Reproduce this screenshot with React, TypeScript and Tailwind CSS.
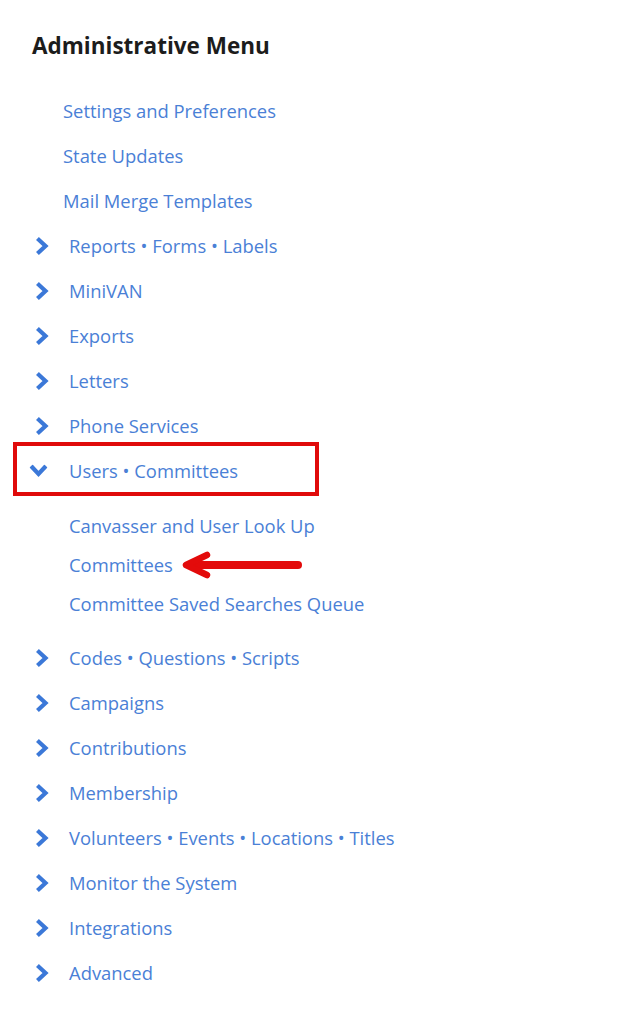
import React from 'react';

const Chevron: React.FC<{ open?: boolean }> = ({ open }) => (
    <svg
        viewBox="0 0 13 18"
        className={`h-[18px] w-[13px] shrink-0 ${open ? 'rotate-90' : ''}`}
        fill="none"
        stroke="#3b78d8"
        strokeWidth={4.2}
        strokeLinecap="square"
        strokeLinejoin="miter"
    >
        <path d="M3 3 L9.5 9 L3 15" />
    </svg>
);

const Arrow: React.FC = () => (
    <svg viewBox="0 0 124 28" className="ml-[7px] h-[28px] w-[124px]" fill="none">
        <path d="M16 14 H118" stroke="#e30b0b" strokeWidth={8} strokeLinecap="round" />
        <path d="M27 4 L6 14 L27 24" stroke="#e30b0b" strokeWidth={6.5} strokeLinecap="round" strokeLinejoin="round" />
    </svg>
);

const topLinks = ['Settings and Preferences', 'State Updates', 'Mail Merge Templates'];
const before = ['Reports • Forms • Labels', 'MiniVAN', 'Exports', 'Letters', 'Phone Services'];
const subItems = ['Canvasser and User Look Up', 'Committees', 'Committee Saved Searches Queue'];
const after = [
    'Codes • Questions • Scripts',
    'Campaigns',
    'Contributions',
    'Membership',
    'Volunteers • Events • Locations • Titles',
    'Monitor the System',
    'Integrations',
    'Advanced',
];

function Section({ label }: { label: string }) {
    return (
        <div className="flex h-[45px] items-center">
            <div className="flex w-[37px] justify-start pl-[4px]">
                <Chevron />
            </div>
            <a className="cursor-pointer text-[#4a80d6]">{label}</a>
        </div>
    );
}

export default function App() {
    return (
        <div
            className="min-h-[1023px] w-[637px] bg-white pl-[32px] pt-[31px] text-[18.4px]"
            style={{ fontFamily: '"Open Sans", "Noto Sans", sans-serif' }}
        >
            <h1 className="text-[22.5px] leading-[30px] font-bold text-[#1c1c1c]">Administrative Menu</h1>
            <div className="mt-[27px] flex flex-col">
                {topLinks.map((l) => (
                    <div key={l} className="flex h-[45px] items-center pl-[31px]">
                        <a className="cursor-pointer text-[#4a80d6]">{l}</a>
                    </div>
                ))}
                {before.map((l) => (
                    <Section key={l} label={l} />
                ))}
                <div className="-mt-[6px] -ml-[19px] flex h-[54px] w-[306px] items-center border-[4px] border-[#e00a0a] pt-[4px] pl-[15px]">
                    <div className="flex w-[37px] justify-start">
                        <Chevron open />
                    </div>
                    <a className="cursor-pointer text-[#4a80d6]">Users • Committees</a>
                </div>
                <div className="flex flex-col pt-[10px] pb-[12px]">
                    {subItems.map((l) => (
                        <div key={l} className="flex h-[39px] items-center pl-[37px]">
                            <a className="cursor-pointer text-[#4a80d6]">{l}</a>
                            {l === 'Committees' && <Arrow />}
                        </div>
                    ))}
                </div>
                {after.map((l) => (
                    <Section key={l} label={l} />
                ))}
            </div>
        </div>
    );
}
